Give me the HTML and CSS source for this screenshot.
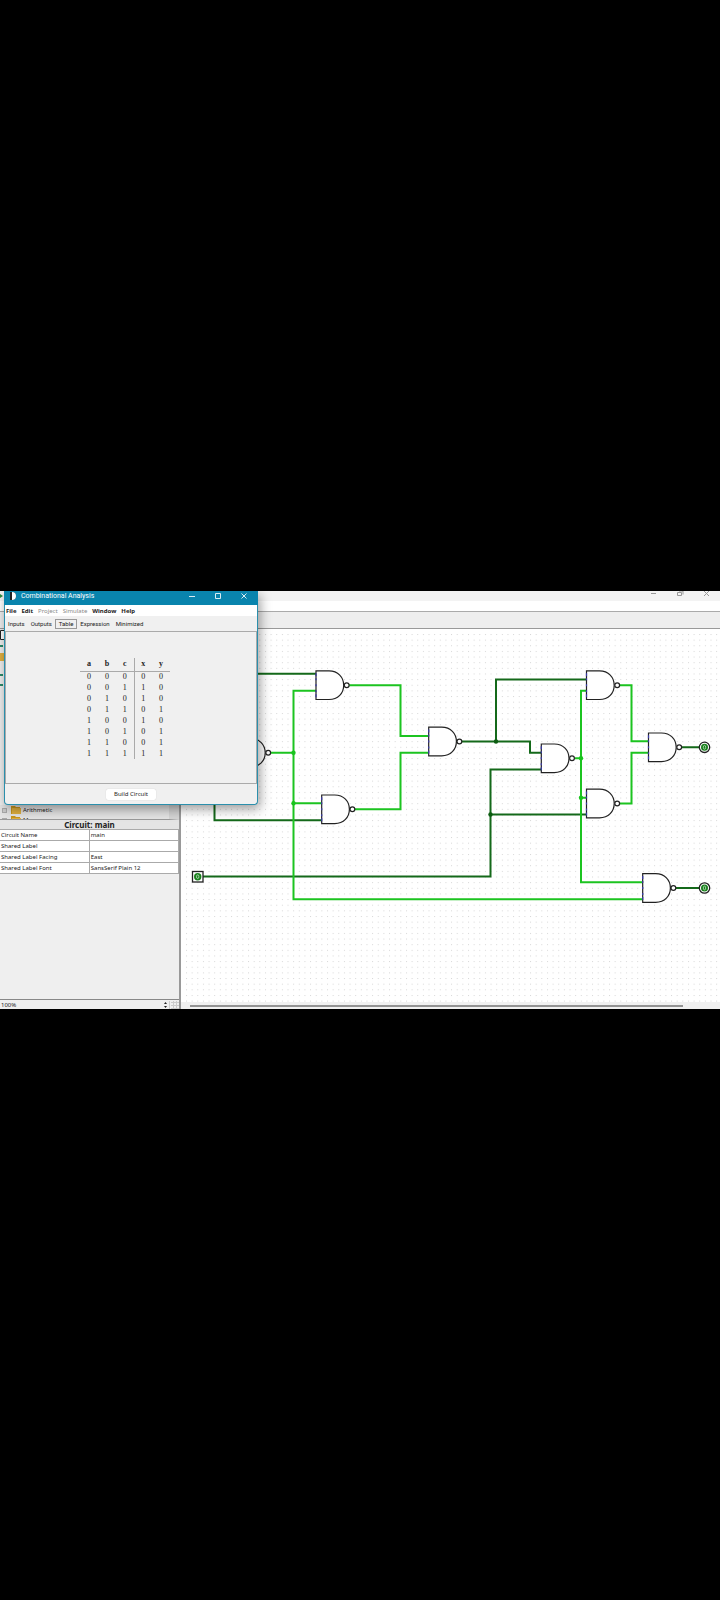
FILE: index.html
```html
<!DOCTYPE html>
<html lang="en">
<head>
<meta charset="utf-8">
<title>Combinational Analysis</title>
<link rel="stylesheet" href="styles.css">
</head>
<body>
<main class="app">
  <header class="app-title">
    <svg width="5" height="10" viewBox="0 0 5 10" aria-hidden="true"><path d="M0 3l3 2-3 2z" fill="#2b8a3a"/></svg>
    <svg width="64" height="10" viewBox="0 0 64 10" fill="none" stroke="#999" aria-hidden="true">
      <path d="M4 2.500h5M30.500 1.500h4v3h-4zM32 0h4v3.500M57 0l5 5M62 0l-5 5"/>
    </svg>
  </header>
  <div class="app-menu"></div>
  <div class="app-tools"></div>
  <div class="workspace">
    <aside class="side">
      <div class="tree">
        <svg class="tree-top" width="8" height="176" viewBox="0 0 8 176" aria-hidden="true">
          <path d="M0 0h8v176H0z" fill="#efefef"/>
          <path d="M.5 1.500h8v9h-8z" fill="#fff" stroke="#222"/>
          <path d="M0 17h3M0 46h3M0 56h3" stroke="#2b8a6a" stroke-width="2"/>
          <path d="M0 24h4v8H0z" fill="#e0b040"/>
        </svg>
        <div class="tree-row"><span class="plus"></span><svg width="10" height="8" viewBox="0 0 10 8" aria-hidden="true"><path d="M0 0h4l1 1h4v7H0z" fill="#c9961c"/><path d="M1 2h9v6H1z" fill="#e0b040"/></svg><span>Arithmetic</span></div>
        <div class="tree-row"><span class="plus"></span><svg width="10" height="8" viewBox="0 0 10 8" aria-hidden="true"><path d="M0 0h4l1 1h4v7H0z" fill="#c9961c"/><path d="M1 2h9v6H1z" fill="#e0b040"/></svg><span>Memory</span></div>
      </div>
      <h2 class="side-title">Circuit: main</h2>
      <table class="props">
        <tr><th scope="row">Circuit Name</th><td>main</td></tr>
        <tr><th scope="row">Shared Label</th><td></td></tr>
        <tr><th scope="row">Shared Label Facing</th><td>East</td></tr>
        <tr><th scope="row">Shared Label Font</th><td>SansSerif Plain 12</td></tr>
      </table>
      <div class="side-fill"></div>
      <div class="zoom-bar"><span>100%</span>
        <svg width="16" height="8" viewBox="0 0 16 8" aria-hidden="true"><path d="M1 3l1.500-2L4 3zM1 5h3L2.500 7z" fill="#222"/><path d="M6.500 0v8M8 1.500h8M8 4.500h8M8 7.500h8M10.500 0v8M13.500 0v8" stroke="#ccc"/></svg>
      </div>
    </aside>
    <section class="canvas">
      <svg class="circuit" viewBox="181 629 539 373" role="img" aria-label="Logic circuit built from NAND gates">
        <defs>
          <pattern id="dots" x="186" y="634" width="5.640" height="5.640" patternUnits="userSpaceOnUse"><rect width="1" height="1" fill="#d6d6d6"/></pattern>
          <g id="gate">
            <path d="M0 -14.300H13C22 -14.300 27.700 -8 27.700 0S22 14.300 13 14.300H0Z" fill="#fff" stroke="#222" stroke-width="1.200"/>
            <path d="M0 -12v3M0 -7v2M0 -1v2M0 5v2M0 9v3" stroke="#3a3aa8" stroke-width="1.200"/>
            <circle cx="30.700" cy="0" r="2.400" fill="#fff" stroke="#222" stroke-width="1.200"/>
          </g>
          <g id="pin">
            <circle r="5.200" fill="#fff" stroke="#222" stroke-width="1.300"/>
            <circle r="3.500" fill="#18801c"/>
            <ellipse rx="1.200" ry="1.900" fill="none" stroke="#d5ecd5" stroke-width=".7"/>
          </g>
        </defs>
        <rect x="186" y="634" width="534" height="368" fill="url(#dots)"/>
        <g class="wire low">
          <path d="M214.500 780V820.300H322M250 673.700H316M203 876.500H490.500V769.500H541M490.500 814.500H587M454 741.500H530V752.700H541M496 741.500V679.500H587M682 747.300H699M675 888H699"/>
        </g>
        <g class="wire high">
          <path d="M270 752.700H293.500M316 690.700H293.500V899.300H643M293.500 803.300H321M349 685.200H400.500V736H428M354 809.300H400.500V752.700H428M575 758.300H581M587 690.700H581V882.300H643M581 797.800H587M620 685.200H631.500V741.300H648M620 803.500H631.500V752.700H648"/>
        </g>
        <g fill="#18c41c"><circle cx="293.500" cy="752.700" r="2.200"/><circle cx="293.500" cy="803.300" r="2.200"/><circle cx="581" cy="758.300" r="2.200"/><circle cx="581" cy="797.800" r="2.200"/></g>
        <g fill="#0c5c10"><circle cx="496" cy="741.500" r="2.200"/><circle cx="490.500" cy="814.500" r="2.200"/></g>
        <use href="#gate" x="237.500" y="752.700"/>
        <use href="#gate" x="316" y="685.200"/>
        <use href="#gate" x="321.700" y="809.300"/>
        <use href="#gate" x="428.700" y="741.500"/>
        <use href="#gate" x="541.300" y="758.300"/>
        <use href="#gate" x="586.500" y="685.200"/>
        <use href="#gate" x="586.500" y="803.500"/>
        <use href="#gate" x="648.500" y="747.300"/>
        <use href="#gate" x="642.700" y="888"/>
        <rect x="192.500" y="871.500" width="10.500" height="10.500" fill="#fff" stroke="#222" stroke-width="1.300"/>
        <circle cx="197.700" cy="876.700" r="3.700" fill="#18801c"/>
        <ellipse cx="197.700" cy="876.700" rx="1.200" ry="1.900" fill="none" stroke="#d5ecd5" stroke-width=".7"/>
        <use href="#pin" x="704.500" y="747.300"/>
        <use href="#pin" x="704.500" y="888"/>
      </svg>
      <div class="scroll"><div class="scroll-thumb"></div></div>
    </section>
  </div>

  <section class="dialog" aria-labelledby="dialog-title">
    <header class="dialog-bar">
      <svg width="8" height="8" viewBox="0 0 8 8" aria-hidden="true"><path d="M1 0h2a4 4 0 0 1 0 8H1z" fill="#222"/><path d="M3 0a4 4 0 0 1 0 8z" fill="#fff"/></svg>
      <h1 id="dialog-title">Combinational Analysis</h1>
      <button class="win" aria-label="Minimize"><svg width="6" height="6" viewBox="0 0 6 6"><path d="M0 3.500h6"/></svg></button>
      <button class="win" aria-label="Maximize"><svg width="6" height="6" viewBox="0 0 6 6"><path d="M.5.5h5v5h-5z"/></svg></button>
      <button class="win" aria-label="Close"><svg width="6" height="6" viewBox="0 0 6 6"><path d="M.5.5l5 5M5.500.5l-5 5"/></svg></button>
    </header>
    <nav class="menu">
      <button>File</button><button>Edit</button><button disabled>Project</button><button disabled>Simulate</button><button>Window</button><button>Help</button>
    </nav>
    <div class="tabs" role="tablist">
      <button role="tab">Inputs</button><button role="tab">Outputs</button><button role="tab" class="on" aria-selected="true">Table</button><button role="tab">Expression</button><button role="tab">Minimized</button>
    </div>
    <div class="panel">
      <table class="truth">
        <thead><tr><th>a</th><th>b</th><th>c</th><th>x</th><th>y</th></tr></thead>
        <tbody>
          <tr><td>0</td><td>0</td><td>0</td><td>0</td><td>0</td></tr>
          <tr><td>0</td><td>0</td><td>1</td><td>1</td><td>0</td></tr>
          <tr><td>0</td><td>1</td><td>0</td><td>1</td><td>0</td></tr>
          <tr><td>0</td><td>1</td><td>1</td><td>0</td><td>1</td></tr>
          <tr><td>1</td><td>0</td><td>0</td><td>1</td><td>0</td></tr>
          <tr><td>1</td><td>0</td><td>1</td><td>0</td><td>1</td></tr>
          <tr><td>1</td><td>1</td><td>0</td><td>0</td><td>1</td></tr>
          <tr><td>1</td><td>1</td><td>1</td><td>1</td><td>1</td></tr>
        </tbody>
      </table>
    </div>
    <footer class="actions"><button class="build">Build Circuit</button></footer>
  </section>
</main>
</body>
</html>
```
FILE: styles.css
```css
* { box-sizing: border-box; }
body {
  margin: 0;
  min-height: 100vh;
  background: #000;
  display: flex;
  align-items: center;
  font: 7px/10px "Noto Sans", sans-serif;
  color: #222;
}
button { font: inherit; color: inherit; background: none; border: 0; padding: 0; }
svg { display: block; }
.app {
  position: relative;
  width: 100%;
  overflow: hidden;
  background: #f0f0f0;
}
.app-title { height: 10px; background: #f3f3f3; display: flex; justify-content: space-between; padding-right: 9px; }
.app-menu { height: 11px; background: #fff; border-bottom: 1px solid #aaa; }
.app-tools { height: 17px; background: #eee; border-bottom: 1px solid #999; }
.workspace { display: flex; }
.side {
  width: 181px;
  flex: none;
  display: flex;
  flex-direction: column;
  border-right: 2px solid #999;
  background: #efefef;
}
.tree { height: 191px; overflow: hidden; border-bottom: 1px solid #999; background: #e4e4e4; border-right: 10px solid #d4d4d4; }
.tree-row { height: 10px; display: flex; align-items: center; gap: 2px; padding-left: 2px; font-size: 6px; line-height: 8px; }
.plus { width: 5px; height: 5px; margin-right: 2px; border: 1px solid #aaa; background: #ccc; }
.side-title { margin: 0; font: bold 8px/9px "Noto Sans", sans-serif; text-align: center; background: #e4e4e4; }
.props { width: 100%; border-collapse: collapse; table-layout: fixed; background: #fff; }
.props th, .props td {
  height: 11px;
  padding: 0 1px;
  border: 1px solid #aaa;
  border-left: 0;
  font-weight: normal;
  font-size: 6px;
  line-height: 10px;
  text-align: left;
}
.side-fill { flex: 1; border-bottom: 1px solid #888; }
.zoom-bar { height: 9px; display: flex; justify-content: space-between; align-items: center; padding-left: 1px; font-size: 6px; line-height: 8px; }
.canvas { flex: 1; min-width: 0; background: #fff; }
.circuit { width: 100%; height: auto; }
.wire { fill: none; stroke-width: 2px; }
.low { stroke: #14691a; }
.high { stroke: #1cc420; }
.scroll { height: 7px; padding: 3px 37px 0 9px; background: #f0f0f0; }
.scroll-thumb { height: 2px; background: #929292; }

.dialog {
  position: absolute;
  left: 4px;
  top: 0;
  width: 254px;
  background: #f0f0f0;
  border: 1px solid #2b8fac;
  border-top: 0;
  border-radius: 0 0 4px 4px;
  box-shadow: 2px 4px 12px rgba(0, 0, 0, .4);
}
.dialog-bar { height: 14px; margin: 0 -1px; padding: 0 1px 4px 5px; display: flex; align-items: center; background: #0984ad; color: #fff; }
.dialog-bar h1 { flex: 1; margin: 0 0 0 4px; font: 7px/10px Roboto, sans-serif; }
.win { width: 26px; display: flex; justify-content: center; }
.win path { fill: none; stroke: #d8edf4; }
.menu { height: 11px; display: flex; gap: 5px; padding-left: 1px; background: #fff; font-weight: bold; font-size: 6px; }
.menu button:disabled { color: #8a8a8a; font-weight: normal; }
.tabs { height: 15px; display: flex; align-items: center; font: 6px/10px Roboto, sans-serif; }
.tabs button { padding: 0 3px; }
.tabs .on { border: 1px solid #999; line-height: 8px; }
.panel { height: 153px; border: 1px solid #aaa; padding: 26px 12px 0 0; }
.truth { margin: 0 auto; border-collapse: collapse; font-family: "Liberation Serif", serif; text-align: center; }
.truth th, .truth td { width: 18px; padding: 0; height: 11px; font-size: 8px; line-height: 10px; }
.truth th { height: 13px; border-bottom: 1px solid #aaa; }
.truth th:nth-child(3), .truth td:nth-child(3) { border-right: 1px solid #aaa; }
.actions { height: 20px; display: flex; justify-content: center; align-items: center; }
.build { padding: 1px 8px; background: #fff; border-radius: 2px; font-size: 6px; line-height: 9px; box-shadow: 0 0 1px #bbb; }
```
